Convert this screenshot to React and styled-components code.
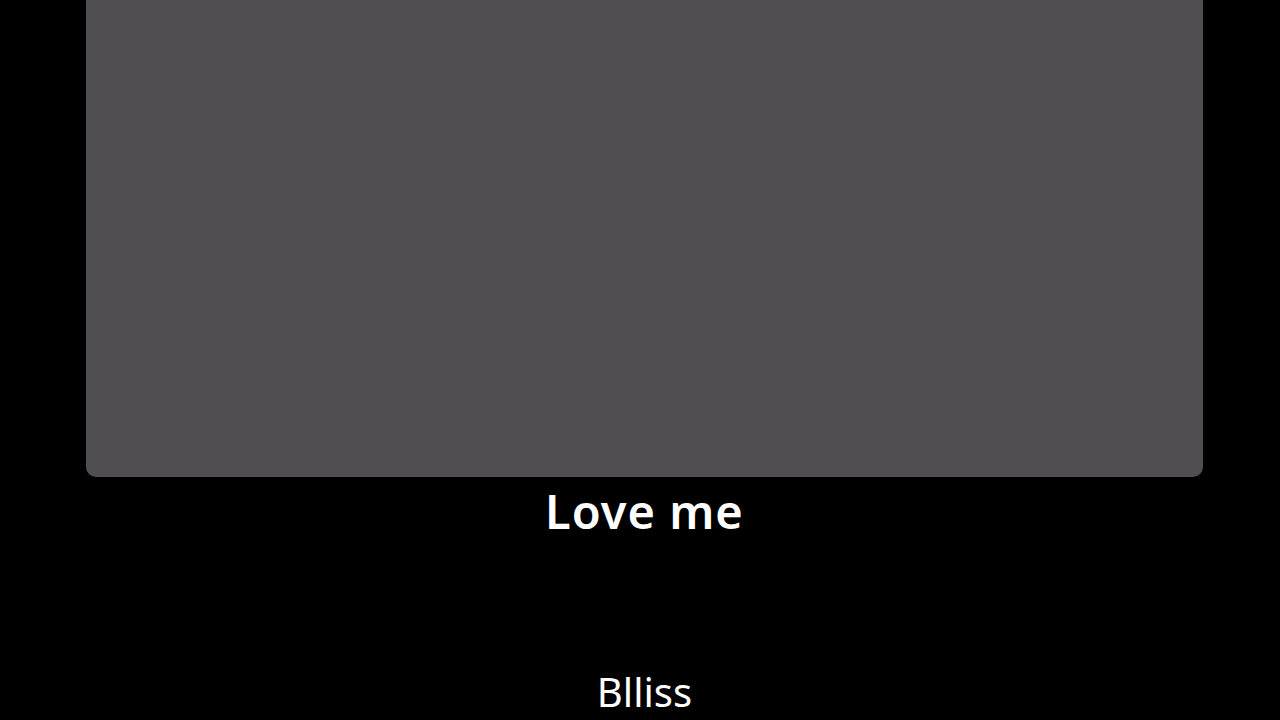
import React from "react";
import styled, { createGlobalStyle } from "styled-components";

const Global = createGlobalStyle`
  html, body { margin: 0; padding: 0; background: #000; }
  body { font-family: "Noto Sans", "Lato", sans-serif; color: #fff; overflow: hidden; }
`;

const Page = styled.main`
  height: 720px;
  padding: 0 77px 0 86px;
  display: flex;
  flex-direction: column;
  align-items: stretch;
  background: #000;
`;

const Artwork = styled.div`
  height: 477px;
  background: #504e52;
  border-radius: 0 0 10px 10px;
`;

const Title = styled.h1`
  margin: 6px 0 0;
  text-align: center;
  font-size: 47px;
  font-weight: 600;
  line-height: 56px;
  letter-spacing: 1px;
  color: #fff;
`;

const Artist = styled.p`
  margin: 129px 0 0;
  text-align: center;
  font-size: 40px;
  font-weight: 400;
  line-height: 48px;
  color: #fff;
`;

export default function App() {
  return (
    <>
      <Global />
      <Page>
        <Artwork />
        <Title>Love me</Title>
        <Artist>Blliss</Artist>
      </Page>
    </>
  );
}
